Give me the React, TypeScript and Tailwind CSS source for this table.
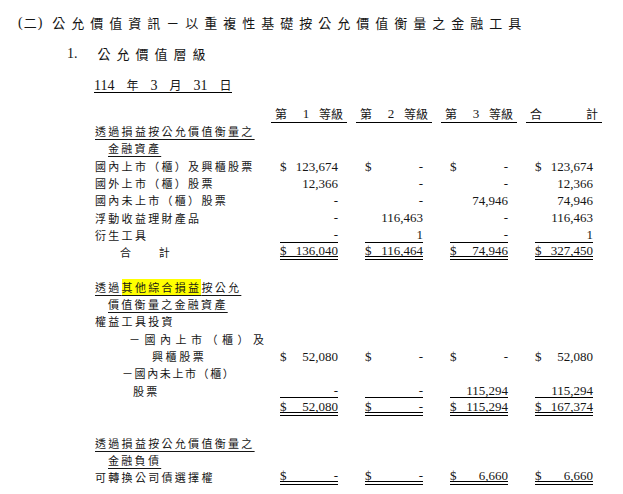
import React from "react";

const cjk = { fontFamily: '"Noto Sans CJK TC", "Noto Sans CJK SC", sans-serif' };
const num = { fontFamily: '"Liberation Serif", "Noto Sans CJK TC", serif' };

type Cell = [string, string];
type Line = "none" | "single" | "double";

type Row = {
  label?: React.ReactNode;
  pad?: number;
  values?: Cell[];
  line?: Line;
};

const dash: Cell = ["", "-"];

const rows: Row[] = [
  { label: <U>透過損益按公允價值衡量之</U>, pad: 95 },
  { label: <U>金融資產</U>, pad: 108 },
  {
    label: "國內上市（櫃）及興櫃股票",
    pad: 95,
    values: [["$", "123,674"], ["$", "-"], ["$", "-"], ["$", "123,674"]],
  },
  {
    label: "國外上市（櫃）股票",
    pad: 95,
    values: [["", "12,366"], dash, dash, ["", "12,366"]],
  },
  {
    label: "國內未上市（櫃）股票",
    pad: 95,
    values: [dash, dash, ["", "74,946"], ["", "74,946"]],
  },
  {
    label: "浮動收益理財產品",
    pad: 95,
    values: [dash, ["", "116,463"], dash, ["", "116,463"]],
  },
  {
    label: "衍生工具",
    pad: 95,
    values: [dash, ["", "1"], dash, ["", "1"]],
    line: "single",
  },
  {
    label: (
      <span className="flex w-[52px] justify-between">
        <span>合</span>
        <span>計</span>
      </span>
    ),
    pad: 120,
    values: [["$", "136,040"], ["$", "116,464"], ["$", "74,946"], ["$", "327,450"]],
    line: "double",
  },
  {},
  {
    label: (
      <U>
        透過<span className="bg-[#ffff00]">其他綜合損益</span>按公允
      </U>
    ),
    pad: 95,
  },
  { label: <U>價值衡量之金融資產</U>, pad: 108 },
  { label: "權益工具投資", pad: 95 },
  {
    label: <span className="tracking-[4.5px]">－國內上市（櫃）及</span>,
    pad: 129,
  },
  {
    label: <span className="tracking-[2.6px]">興櫃股票</span>,
    pad: 152,
    values: [["$", "52,080"], ["$", "-"], ["$", "-"], ["$", "52,080"]],
  },
  {
    label: <span className="tracking-[1.6px]">－國內未上市（櫃）</span>,
    pad: 122,
  },
  {
    label: "股票",
    pad: 133,
    values: [dash, dash, ["", "115,294"], ["", "115,294"]],
    line: "single",
  },
  {
    values: [["$", "52,080"], ["$", "-"], ["$", "115,294"], ["$", "167,374"]],
    line: "double",
  },
  {},
  { label: <U>透過損益按公允價值衡量之</U>, pad: 95 },
  { label: <U>金融負債</U>, pad: 108 },
  {
    label: "可轉換公司債選擇權",
    pad: 95,
    values: [["$", "-"], ["$", "-"], ["$", "6,660"], ["$", "6,660"]],
    line: "double",
  },
];

function U({ children }: { children: React.ReactNode }) {
  return (
    <span className="underline decoration-1 underline-offset-[3px]">
      {children}
    </span>
  );
}

function ValueCell({ cell, line }: { cell: Cell; line: Line }) {
  const border =
    line === "single"
      ? "border-b border-black"
      : line === "double"
        ? "border-b-[4px] border-double border-black"
        : "";
  return (
    <div className="w-[76px] shrink-0 px-[9px]">
      <div
        className={`flex h-[15px] items-center justify-between leading-none ${border}`}
        style={num}
      >
        <span>{cell[0]}</span>
        <span>{cell[1]}</span>
      </div>
    </div>
  );
}

function HeaderCell({ items }: { items: string[] }) {
  return (
    <div className="flex h-full w-[76px] shrink-0 items-center justify-between border-b border-black px-[4px]">
      {items.map((t, i) =>
        t === "1" || t === "2" || t === "3" ? (
          <span key={i} className="text-[13px]" style={num}>
            {t}
          </span>
        ) : (
          <span key={i} className="tracking-[6px] last:tracking-normal">
            {t}
          </span>
        ),
      )}
    </div>
  );
}

export default function App() {
  return (
    <div className="h-[494px] w-[623px] overflow-hidden bg-white text-[#151515]" style={cjk}>
      <div className="mt-[14px] flex h-[17px] items-center pl-[18px] text-[13px]">
        <span style={num} className="text-[14px]">(</span>
        <span className="mx-[1px]">二</span>
        <span style={num} className="text-[14px]">)</span>
        <span className="ml-[10px] tracking-[6px]">
          公允價值資訊－以重複性基礎按公允價值衡量之金融工具
        </span>
      </div>

      <div className="mt-[14px] flex h-[17px] items-center pl-[67px] text-[13px]">
        <span style={num} className="text-[14px]">1.</span>
        <span className="ml-[20px] tracking-[6px]">公允價值層級</span>
      </div>

      <div className="mt-[15px] flex h-[17px] items-center pl-[94px]">
        <span className="inline-flex h-[15px] items-center gap-[12px] border-b border-black text-[12px]">
          <span style={num} className="text-[14px]">114</span>
          <span>年</span>
          <span style={num} className="text-[14px]">3</span>
          <span>月</span>
          <span style={num} className="text-[14px]">31</span>
          <span>日</span>
        </span>
      </div>

      <div className="mt-[11.5px] flex h-[17.3px] text-[12px]">
        <div className="w-[271px] shrink-0" />
        <div className="flex gap-[9px]">
          <HeaderCell items={["第", "1", "等級"]} />
          <HeaderCell items={["第", "2", "等級"]} />
          <HeaderCell items={["第", "3", "等級"]} />
          <HeaderCell items={["合", "計"]} />
        </div>
      </div>

      {rows.map((r, i) => (
        <div key={i} className="flex h-[17.3px] items-center">
          <div
            className="w-[271px] shrink-0 whitespace-nowrap text-[11px] tracking-[2.3px]"
            style={{ paddingLeft: r.pad ?? 0 }}
          >
            {r.label}
          </div>
          {r.values && (
            <div className="flex gap-[9px] text-[13px]">
              {r.values.map((c, j) => (
                <ValueCell key={j} cell={c} line={r.line ?? "none"} />
              ))}
            </div>
          )}
        </div>
      ))}
    </div>
  );
}
